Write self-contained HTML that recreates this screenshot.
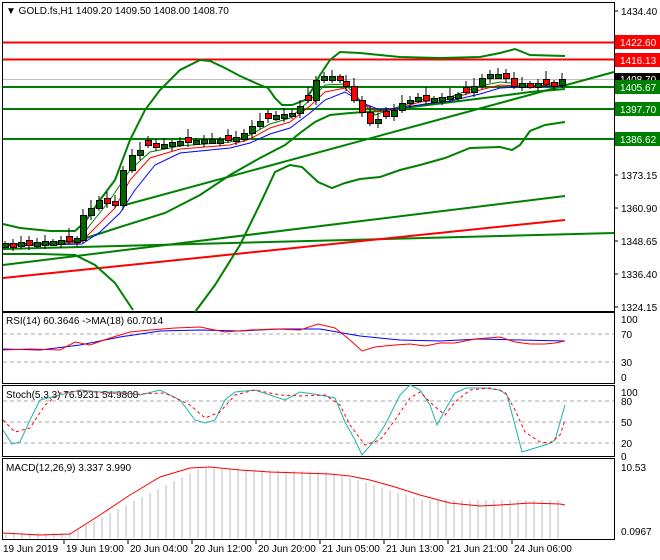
<!DOCTYPE html>
<html><head><meta charset="utf-8"><style>
body{margin:0;background:#fff;width:660px;height:560px;overflow:hidden;font-family:"Liberation Sans",sans-serif}
svg{display:block}
text{font-family:"Liberation Sans",sans-serif;font-size:10px}
</style></head><body>
<svg id="s" width="660" height="560" xmlns="http://www.w3.org/2000/svg">
<rect width="660" height="560" fill="#fff"/>
<g fill="none" stroke="#000" stroke-width="1">
<rect x="2.5" y="2.5" width="612" height="309"/>
<rect x="2.5" y="312.5" width="612" height="71"/>
<rect x="2.5" y="385.5" width="612" height="71"/>
<rect x="2.5" y="458.5" width="612" height="81"/>
</g>
<line x1="3" y1="42.5" x2="614" y2="42.5" stroke="#f00" stroke-width="2"/>
<line x1="3" y1="59.5" x2="614" y2="59.5" stroke="#f00" stroke-width="2"/>
<line x1="3" y1="79.5" x2="614" y2="79.5" stroke="#c0c0c0"/>
<line x1="3" y1="87" x2="614" y2="87" stroke="#008000" stroke-width="2"/>
<line x1="3" y1="109" x2="614" y2="109" stroke="#008000" stroke-width="2"/>
<line x1="3" y1="139" x2="614" y2="139" stroke="#008000" stroke-width="2"/>
<g stroke-width="2" fill="none">
<line x1="3" y1="249" x2="614" y2="233" stroke="#008000"/>
<line x1="3" y1="265" x2="565" y2="196" stroke="#008000"/>
<line x1="3" y1="278" x2="565" y2="220" stroke="#f00"/>
<line x1="125" y1="205" x2="614" y2="72" stroke="#008000"/>
<polyline stroke="#008000" points="3,224 20,228 50,231 75,231 85,222 100,200 115,180 130,140 145,110 160,90 180,70 200,60 210,61 225,68 240,76 260,85 268,88 275,98 282,105 292,105 305,100 312,90 320,75 330,60 340,52 360,53 400,57 440,58 480,57 500,53 515,49 530,55 565,56"/>
<polyline stroke="#008000" points="3,254 40,254 75,255 95,265 115,283 133,310"/>
<polyline stroke="#008000" points="195,312 215,285 240,245 262,200 275,172 290,165 302,167 318,182 332,188 345,183 360,179 380,177 400,170 420,165 445,158 470,148 500,147 512,150 520,145 530,131 545,125 565,122"/>
<polyline stroke="#008000" points="3,245 50,243 80,240 120,227 165,213 200,195 230,175 260,158 285,145 300,133 315,122 330,115 350,113 380,111 420,106 460,101 500,96 530,92 565,89"/>
</g>
<g fill="none" stroke-width="1">
<polyline stroke="#008000" points="3,244 78,242 90,225 110,200 130,170 150,152 180,146 230,142 250,135 270,124 290,118 310,100 325,85 345,84 360,100 375,115 395,108 420,100 450,97 480,86 500,82 520,84 565,83"/>
<polyline stroke="#f00" points="3,245 80,243 95,228 115,208 130,180 150,158 180,149 230,145 250,139 270,128 290,122 310,106 325,92 345,88 360,102 378,112 400,108 420,102 450,99 480,90 500,85 520,86 565,85"/>
<polyline stroke="#00f" points="3,246 82,244 100,232 120,213 135,190 155,165 180,153 230,148 250,143 270,134 290,128 310,113 325,100 345,92 365,104 380,110 400,108 425,104 450,101 480,94 500,88 520,87 565,86"/>
</g>
<g id="c"></g>
<text x="6" y="324" fill="#000">RSI(14) 60.3646   -&gt;MA(18) 60.7014</text>
<g stroke="#aaa" stroke-dasharray="4,3"><line x1="3" y1="334" x2="614" y2="334"/><line x1="3" y1="362" x2="614" y2="362"/>
<line x1="3" y1="401" x2="614" y2="401"/><line x1="3" y1="422" x2="614" y2="422"/><line x1="3" y1="443" x2="614" y2="443"/></g>
<polyline fill="none" stroke="#00f" points="3,349 40,350 80,345 120,337 160,331 200,330 240,331 280,329 320,329 360,336 400,340 440,341 480,339 520,340 565,341"/>
<polyline fill="none" stroke="#f00" points="3,350 30,349 60,350 75,342 90,345 110,338 130,332 150,330 175,328 200,327 225,332 250,330 275,329 300,330 318,324 335,328 350,340 362,351 375,347 395,345 410,344 425,346 440,343 455,343 475,339 500,337 515,342 530,344 545,344 555,343 565,341"/>
<text x="6" y="398" fill="#000">Stoch(5,3,3) 76.9231 54.9808</text>
<polyline fill="none" stroke="#20b2aa" points="3,430 12,444 20,442 30,420 40,400 60,395 80,390 100,392 120,392 140,395 160,390 180,400 195,420 205,423 215,420 225,400 235,392 255,390 270,395 285,400 300,392 320,395 335,398 345,422 355,440 362,455 375,440 385,425 400,395 410,385 420,390 430,405 437,425 445,410 455,393 466,388 485,388 500,390 507,395 515,425 522,452 535,448 548,444 555,440 565,405"/>
<polyline fill="none" stroke="#f00" stroke-dasharray="3,3" points="3,420 15,432 30,428 45,405 60,393 80,391 110,393 140,394 165,393 190,405 205,418 220,412 235,395 255,390 280,395 300,396 325,395 340,405 350,425 365,445 380,440 395,420 410,398 420,392 433,405 445,415 455,402 470,390 490,388 505,392 515,410 525,432 540,442 550,443 560,435 565,420"/>
<text x="6" y="471" fill="#000">MACD(12,26,9) 3.337 3.990</text>
<g id="m" stroke="#bbb"></g>
<polyline fill="none" stroke="#f00" points="3,533 40,535 70,534 100,515 130,495 160,477 190,468 210,467 240,470 270,472 300,473 330,474 350,476 370,480 395,487 420,495 450,503 480,506 500,505 530,503 560,504 565,505"/>
<text x="6" y="14" fill="#000">&#9660; GOLD.fs,H1  1409.20 1409.50 1408.00 1408.70</text>
<g fill="#000">
<text x="621" y="15">1434.40</text>
<text x="621" y="179">1373.15</text>
<text x="621" y="212">1360.90</text>
<text x="621" y="245">1348.65</text>
<text x="621" y="278">1336.40</text>
<text x="621" y="311">1324.15</text>
<text x="621" y="323">100</text><text x="621" y="338">70</text><text x="621" y="366">30</text><text x="621" y="381">0</text>
<text x="621" y="396">100</text><text x="621" y="405">80</text><text x="621" y="426">50</text><text x="621" y="447">20</text><text x="621" y="460">0</text>
<text x="621" y="471">10.53</text><text x="621" y="535">0.0967</text>
<text x="3" y="552">19 Jun 2019</text><text x="66" y="552">19 Jun 19:00</text><text x="130" y="552">20 Jun 04:00</text><text x="194" y="552">20 Jun 12:00</text><text x="258" y="552">20 Jun 20:00</text><text x="322" y="552">21 Jun 05:00</text><text x="386" y="552">21 Jun 13:00</text><text x="450" y="552">21 Jun 21:00</text><text x="514" y="552">24 Jun 06:00</text>
</g>
<g stroke="#000"><line x1="614" y1="11" x2="618" y2="11"/><line x1="614" y1="175" x2="618" y2="175"/><line x1="614" y1="208" x2="618" y2="208"/><line x1="614" y1="241" x2="618" y2="241"/><line x1="614" y1="274" x2="618" y2="274"/><line x1="614" y1="307" x2="618" y2="307"/>
<line x1="64" y1="540" x2="64" y2="544"/><line x1="128" y1="540" x2="128" y2="544"/><line x1="192" y1="540" x2="192" y2="544"/><line x1="256" y1="540" x2="256" y2="544"/><line x1="320" y1="540" x2="320" y2="544"/><line x1="384" y1="540" x2="384" y2="544"/><line x1="448" y1="540" x2="448" y2="544"/><line x1="512" y1="540" x2="512" y2="544"/></g>
<rect x="615" y="35" width="45" height="14" fill="#f00"/><text x="620" y="46" fill="#fff">1422.60</text>
<rect x="615" y="53" width="45" height="14" fill="#f00"/><text x="620" y="64" fill="#fff">1416.13</text>
<rect x="615" y="73" width="45" height="13" fill="#000"/><text x="620" y="83" fill="#fff">1408.70</text>
<rect x="615" y="80" width="45" height="14" fill="#008000"/><text x="620" y="91" fill="#fff">1405.67</text>
<rect x="615" y="102" width="45" height="14" fill="#008000"/><text x="620" y="113" fill="#fff">1397.70</text>
<rect x="615" y="132" width="45" height="14" fill="#008000"/><text x="620" y="143" fill="#fff">1386.62</text>
</svg>
<script>
var closes=[[5,245],[13,246],[21,244],[29,245],[37,244],[45,243],[53,243],[61,242],[69,241],[77,240],[83,215],[91,208],[99,200],[107,203],[115,205],[123,170],[132,155],[140,150],[148,145],[156,146],[164,146],[172,144],[180,143],[188,142],[196,142],[204,141],[212,141],[220,141],[228,140],[236,139],[244,133],[252,126],[260,121],[268,118],[276,117],[284,116],[292,113],[300,106],[308,100],[316,80],[324,78],[332,78],[340,80],[346,86],[354,100],[362,112],[370,123],[378,121],[386,116],[394,110],[402,103],[410,100],[418,99],[426,100],[434,100],[442,99],[450,96],[458,96],[466,92],[474,86],[482,78],[490,76],[498,76],[506,78],[514,86],[522,85],[530,86],[538,85],[546,84],[554,85],[562,79]];
var g='',prev=245;
closes.forEach(function(c,i){var x=c[0],cl=c[1],op=prev;if(i%5==3)op=cl-5;var t=Math.min(op,cl),b=Math.max(op,cl);var red=op<cl;
g+='<line x1="'+x+'" y1="'+(t-4-(i%3)*2)+'" x2="'+x+'" y2="'+(b+3+(i%2)*2)+'" stroke="#000"/>';
if(b-t<3){t-=2;b=t+4;}
g+='<rect x="'+(x-3)+'.5" y="'+t+'.5" width="6" height="'+(b-t)+'" fill="'+(red?'#f00':'#006400')+'" stroke="#000"/>';
prev=cl;});
document.getElementById('c').innerHTML=g;
var m='';for(var x=6;x<566;x+=8){var y;if(x<70)y=533;else if(x<200)y=533-(x-70)*0.5;else if(x<330)y=468+(x-200)*0.03;else if(x<430)y=472+(x-330)*0.3;else y=500;
m+='<line x1="'+x+'" y1="'+y+'" x2="'+x+'" y2="538"/>';}
document.getElementById('m').innerHTML=m;
</script>
</body></html>
